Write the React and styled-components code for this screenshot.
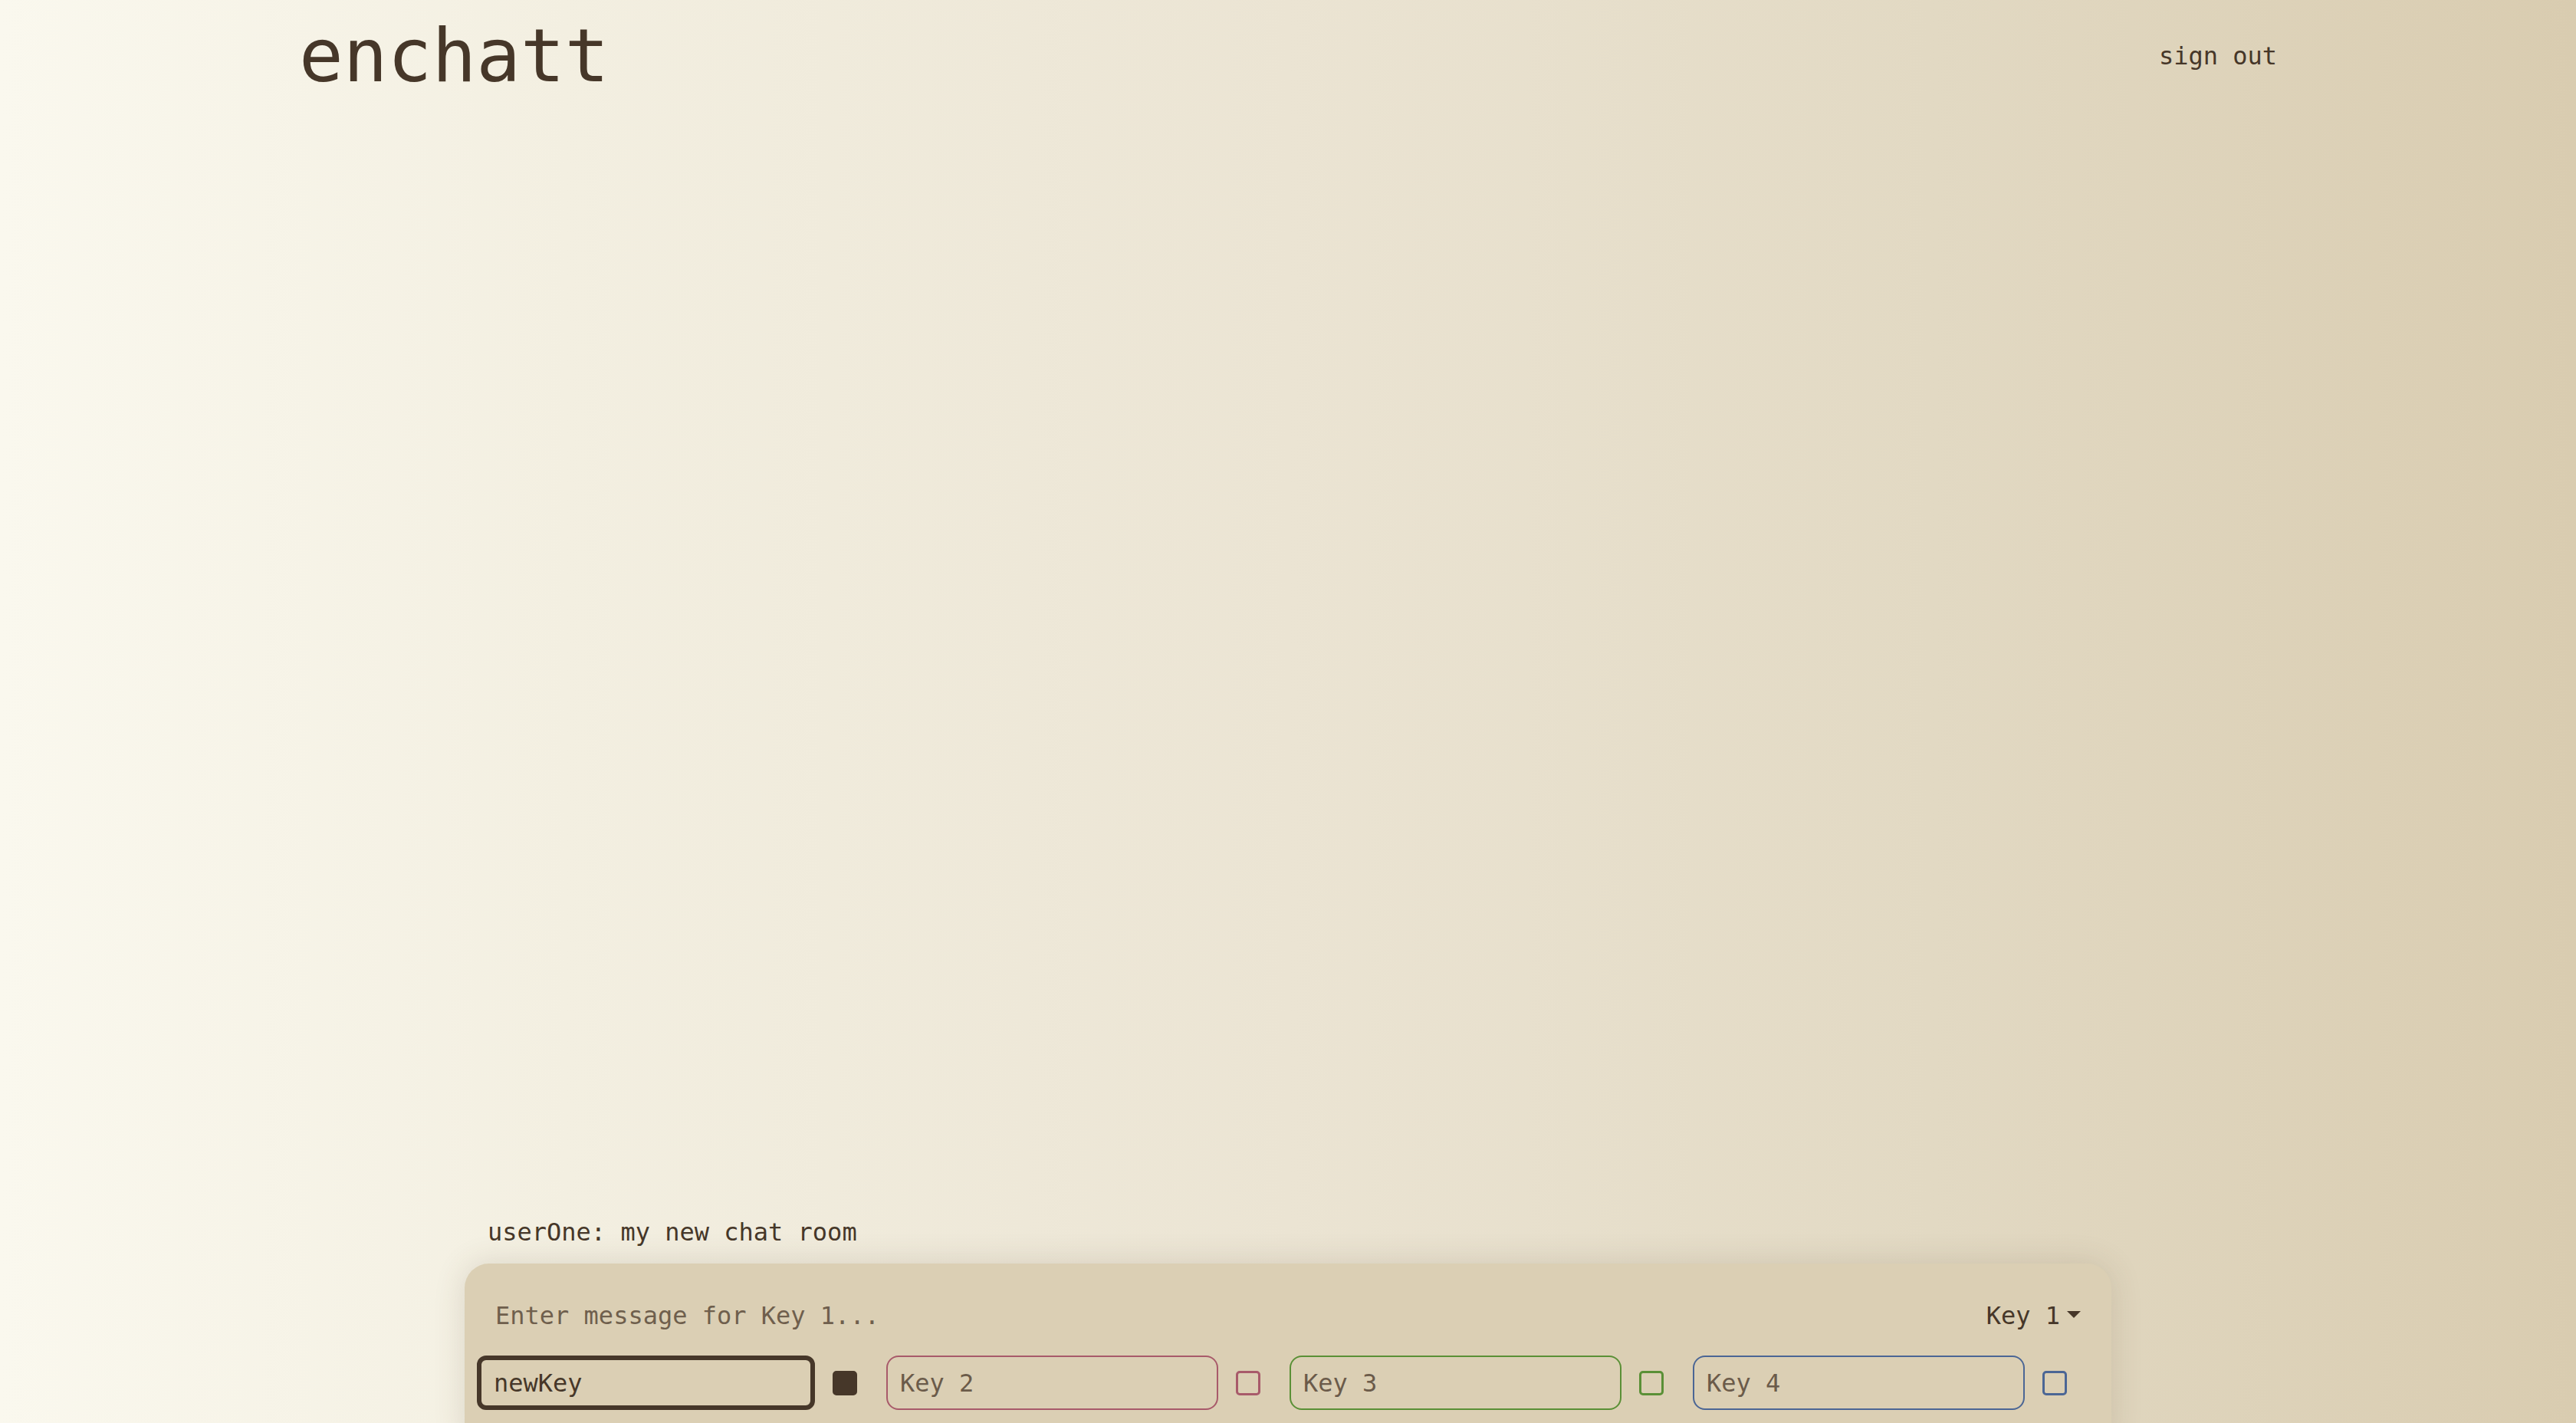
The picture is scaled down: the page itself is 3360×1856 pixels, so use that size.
import React, { useState } from 'react';
import styled, { createGlobalStyle } from 'styled-components';

const GlobalStyle = createGlobalStyle`
    html, body {
        margin: 0;
        padding: 0;
    }
    body {
        font-family: "DejaVu Sans Mono", "Liberation Mono", monospace;
        color: #463729;
    }
`

const Page = styled.div`
    height: 100vh;
    display: flex;
    flex-direction: column;
    overflow: hidden;
    background: linear-gradient(90deg, #faf8ee 0%, #f3efe1 22%, #ebe4d3 50%, #e2d9c3 75%, #d9ccb0 100%);
`

const Header = styled.header`
    width: 2580px;
    margin: 0 auto;
    padding-top: 17px;
    display: flex;
    justify-content: space-between;
    align-items: center;
`

const Logo = styled.h1`
    margin: 0;
    font-family: "DejaVu Sans Mono", monospace;
    font-weight: normal;
    font-size: 96px;
    line-height: 112px;
    color: #463729;
`

const SignOut = styled.button`
    border: none;
    background: none;
    padding: 0;
    font-family: inherit;
    font-size: 32px;
    line-height: 42px;
    color: #463729;
    cursor: pointer;
`

const Main = styled.main`
    flex: 1;
    width: 2148px;
    margin: 0 auto;
    display: flex;
    flex-direction: column;
    justify-content: flex-end;
`

const Messages = styled.div`
    padding: 0 30px;
    margin-bottom: 20px;
`

const Message = styled.div`
    font-size: 32px;
    line-height: 42px;
    white-space: pre;
`

const Panel = styled.div`
    display: flex;
    flex-direction: column;
    gap: 15px;
    padding: 16px 16px 57px;
    margin-bottom: -40px;
    background: #dbcfb4;
    border-radius: 32px;
    box-shadow: 0 0 40px rgba(90, 70, 45, 0.16);
`

const ComposeRow = styled.div`
    display: flex;
    align-items: center;
    padding-top: 15px;
`

const MessageInput = styled.input`
    flex: 1;
    border: none;
    outline: none;
    background: transparent;
    padding: 16px 24px;
    font-family: inherit;
    font-size: 32px;
    line-height: 42px;
    height: 74px;
    box-sizing: border-box;
    color: #463729;
    caret-color: #463729;
    &::placeholder {
        color: #6f5f4d;
    }
`

const KeySelect = styled.button`
    display: flex;
    align-items: center;
    gap: 9px;
    border: none;
    background: none;
    padding: 0 24px 0 0;
    font-family: inherit;
    font-size: 32px;
    line-height: 42px;
    color: #463729;
    cursor: pointer;
    svg {
        margin-top: -4px;
    }
`

const KeyRow = styled.div`
    display: flex;
    align-items: center;
    gap: 38px;
`

const KeyGroup = styled.div`
    display: flex;
    align-items: center;
    gap: 23px;
`

const KeyInput = styled.input`
    box-sizing: border-box;
    width: ${props => props.active ? '441px' : '433px'};
    height: 71px;
    padding: 0 16px;
    border: ${props => props.active ? '6px' : '2px'} solid ${props => props.color};
    border-radius: ${props => props.active ? '12px' : '16px'};
    background: transparent;
    outline: none;
    font-family: inherit;
    font-size: 32px;
    color: #463729;
    &::placeholder {
        color: #6b5b4a;
    }
`

const KeyToggle = styled.span`
    box-sizing: border-box;
    width: 32px;
    height: 32px;
    border: 3px solid ${props => props.color};
    border-radius: 5px;
    background: ${props => props.active ? props.color : 'transparent'};
    cursor: pointer;
`

const keys = [
    { id: 1, placeholder: 'Key 1', color: '#463729' },
    { id: 2, placeholder: 'Key 2', color: '#a85a6a' },
    { id: 3, placeholder: 'Key 3', color: '#5a9036' },
    { id: 4, placeholder: 'Key 4', color: '#4b6695' },
]

export default function App() {
    const [values, setValues] = useState({ 1: 'newKey', 2: '', 3: '', 4: '' });
    const [activeKey, setActiveKey] = useState(1);

    return (
        <Page>
            <GlobalStyle />
            <Header>
                <Logo>enchatt</Logo>
                <SignOut>sign out</SignOut>
            </Header>
            <Main>
                <Messages>
                    <Message>userOne: my new chat room</Message>
                </Messages>
                <Panel>
                    <ComposeRow>
                        <MessageInput autoFocus placeholder={`Enter message for Key ${activeKey}...`} />
                        <KeySelect>
                            Key {activeKey}
                            <svg width="18" height="9" viewBox="0 0 18 9">
                                <path d="M0 0 H18 L9 9 Z" fill="#463729" />
                            </svg>
                        </KeySelect>
                    </ComposeRow>
                    <KeyRow>
                        {keys.map(k => (
                            <KeyGroup key={k.id}>
                                <KeyInput
                                    active={k.id === activeKey}
                                    color={k.color}
                                    placeholder={k.placeholder}
                                    value={values[k.id]}
                                    onChange={e => setValues({ ...values, [k.id]: e.target.value })}
                                />
                                <KeyToggle
                                    color={k.color}
                                    active={k.id === activeKey}
                                    onClick={() => setActiveKey(k.id)}
                                />
                            </KeyGroup>
                        ))}
                    </KeyRow>
                </Panel>
            </Main>
        </Page>
    );
}
